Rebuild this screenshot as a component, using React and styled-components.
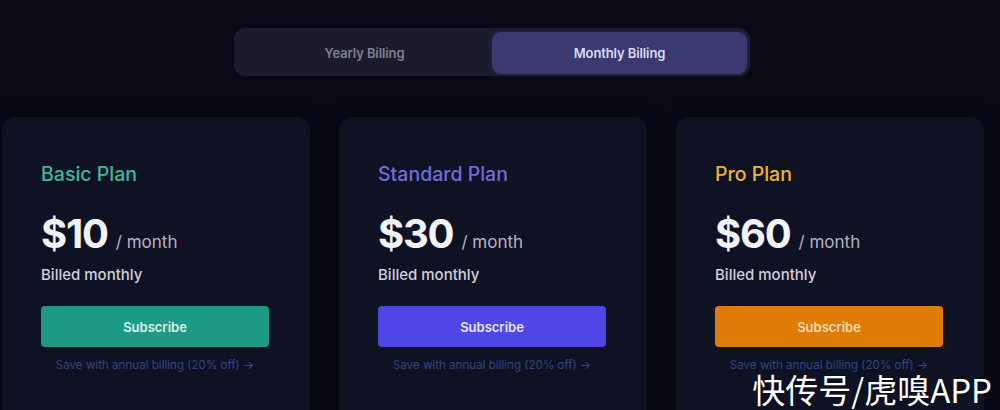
import React from 'react'
import styled, { createGlobalStyle } from 'styled-components'

const GlobalStyle = createGlobalStyle`
  html, body {
    margin: 0;
    padding: 0;
    background: #0a0a17;
  }
  * { box-sizing: border-box; }
`

const Page = styled.div`
  position: relative;
  width: 1000px;
  height: 410px;
  overflow: hidden;
  background: #0a0a17;
  font-family: Inter, "Liberation Sans", sans-serif;
  padding: 28px 14px 0 0;
  display: flex;
  flex-direction: column;
  align-items: center;
`

const Toggle = styled.div`
  flex-shrink: 0;
  display: grid;
  grid-template-columns: 1fr 1fr;
  width: 516px;
  height: 48px;
  margin-right: 2px;
  padding: 4px 3px 2px 3px;
  background: #1b1b2b;
  border-radius: 11px;
`

const ToggleOption = styled.div`
  display: flex;
  align-items: center;
  justify-content: center;
  border-radius: 9px;
  font-size: 13px;
  font-weight: 600;
  letter-spacing: -0.1px;
  color: ${p => (p.active ? '#dcdcf0' : '#7f8091')};
  background: ${p => (p.active ? '#3a3970' : 'transparent')};
  box-shadow: ${p => (p.active ? '0 0 6px rgba(60, 58, 120, 0.5)' : 'none')};
`

const Cards = styled.div`
  flex-shrink: 0;
  display: flex;
  gap: 29px;
  margin-top: 41px;
`

const Card = styled.div`
  width: 308px;
  height: 320px;
  padding: 45px 40px 0 39px;
  background: #0f1223;
  border-radius: 14px;
  box-shadow: 0 0 18px rgba(0, 0, 0, 0.45);
  display: flex;
  flex-direction: column;
`

const PlanName = styled.div`
  font-size: 19.5px;
  line-height: 24px;
  font-weight: 500;
  color: ${p => p.color};
`

const PriceRow = styled.div`
  display: flex;
  align-items: baseline;
  margin-top: 24px;
  height: 48px;
`

const Price = styled.span`
  font-size: 40px;
  line-height: 48px;
  font-weight: 700;
  color: #f2f2f7;
  letter-spacing: -1.2px;
`

const Period = styled.span`
  margin-left: 8px;
  font-size: 17px;
  color: #b4b5c4;
`

const Billed = styled.div`
  margin-top: 7px;
  font-size: 15px;
  line-height: 20px;
  font-weight: 500;
  color: #cfd0dc;
`

const SubscribeButton = styled.button`
  margin-top: 21px;
  width: 228px;
  height: 41px;
  border: none;
  border-radius: 4px;
  background: ${p => p.bg};
  color: ${p => p.fg};
  font-family: inherit;
  font-size: 13px;
  font-weight: 600;
`

const SaveLink = styled.div`
  margin-top: 11px;
  width: 228px;
  text-align: center;
  font-size: 11.6px;
  line-height: 15px;
  color: #2d4883;
`

const Watermark = styled.div`
  position: absolute;
  right: 8px;
  bottom: 5px;
  font-family: "Noto Sans CJK SC", "Noto Sans", sans-serif;
  font-size: 33px;
  line-height: 32px;
  font-weight: 400;
  color: #ffffff;
  text-shadow: 0 0 2px rgba(0, 0, 0, 0.7);
`

const plans = [
  { name: 'Basic Plan', price: '$10', title: '#3bb99b', bg: '#1d9a85', fg: '#dcf2ec' },
  { name: 'Standard Plan', price: '$30', title: '#6e6ddc', bg: '#4f46e5', fg: '#e8e6ff' },
  { name: 'Pro Plan', price: '$60', title: '#efb42e', bg: '#de7c06', fg: '#f7dcb4' },
]

const App = () => (
  <>
    <GlobalStyle />
    <Page>
      <Toggle>
        <ToggleOption>Yearly Billing</ToggleOption>
        <ToggleOption active>Monthly Billing</ToggleOption>
      </Toggle>
      <Cards>
        {plans.map(plan => (
          <Card key={plan.name}>
            <PlanName color={plan.title}>{plan.name}</PlanName>
            <PriceRow>
              <Price>{plan.price}</Price>
              <Period>/ month</Period>
            </PriceRow>
            <Billed>Billed monthly</Billed>
            <SubscribeButton bg={plan.bg} fg={plan.fg}>Subscribe</SubscribeButton>
            <SaveLink>Save with annual billing (20% off) →</SaveLink>
          </Card>
        ))}
      </Cards>
      <Watermark>快传号/虎嗅APP</Watermark>
    </Page>
  </>
)

export default App
